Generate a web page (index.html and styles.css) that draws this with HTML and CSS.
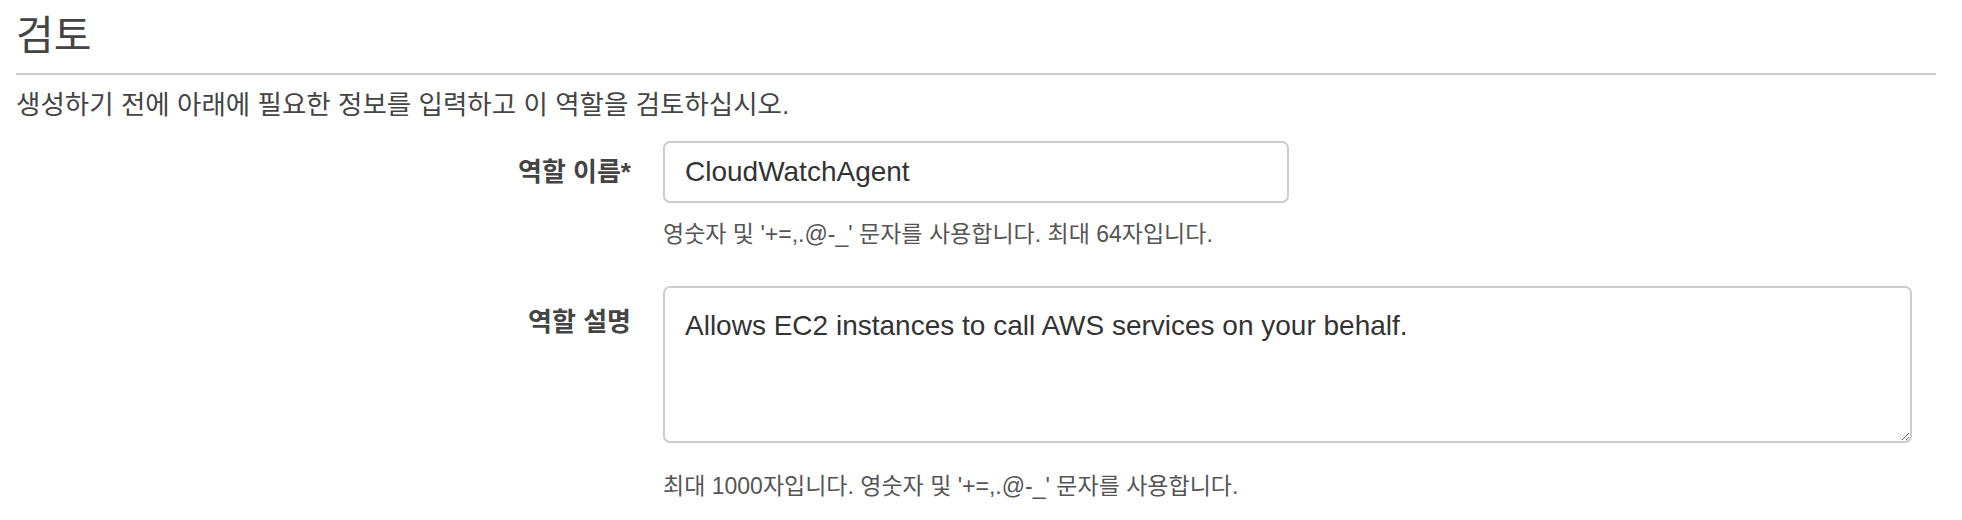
FILE: index.html
```html
<!DOCTYPE html>
<html lang="ko">
<head>
<meta charset="utf-8">
<title>검토</title>
<link rel="stylesheet" href="styles.css">
</head>
<body>
<div class="page">
  <h1 class="title">검토</h1>
  <div class="rule"></div>
  <p class="intro">생성하기 전에 아래에 필요한 정보를 입력하고 이 역할을 검토하십시오.</p>
  <div class="form">
    <label class="label label-mid" for="role-name">역할 이름*</label>
    <div class="field">
      <input id="role-name" class="input" type="text" value="CloudWatchAgent">
      <div class="help">영숫자 및 '+=,.@-_' 문자를 사용합니다. 최대 64자입니다.</div>
    </div>
    <label class="label label-top" for="role-desc">역할 설명</label>
    <div class="field">
      <textarea id="role-desc" class="textarea">Allows EC2 instances to call AWS services on your behalf.</textarea>
      <div class="help help-2">최대 1000자입니다. 영숫자 및 '+=,.@-_' 문자를 사용합니다.</div>
    </div>
  </div>
</div>
</body>
</html>
```
FILE: styles.css
```css
html, body {
  margin: 0;
  padding: 0;
  background: #ffffff;
}
body {
  font-family: "Liberation Sans", "Noto Sans CJK KR", sans-serif;
  color: #444444;
}
.page {
  padding: 0 26px 0 16px;
}
.title {
  margin: 0;
  padding-top: 12px;
  font-size: 41px;
  line-height: 48px;
  font-weight: 400;
  color: #444444;
}
.rule {
  margin-top: 13px;
  border-top: 2px solid #cccccc;
}
.intro {
  margin: 14px 0 0;
  font-size: 26.5px;
  line-height: 32px;
  color: #444444;
}
.form {
  display: grid;
  grid-template-columns: 615px 1fr;
  column-gap: 32px;
  margin-top: 20px;
}
.label {
  text-align: right;
  font-weight: 700;
  font-size: 26px;
  line-height: 32px;
  color: #444444;
}
.label-mid {
  padding-top: 15px;
}
.label-top {
  padding-top: 57px;
}
.field {
  display: flex;
  flex-direction: column;
  align-items: flex-start;
}
.input, .textarea {
  box-sizing: border-box;
  font-family: "Liberation Sans", "Noto Sans CJK KR", sans-serif;
  font-size: 28px;
  color: #333333;
  border: 2px solid #cccccc;
  border-radius: 7px;
  background: #ffffff;
  padding: 0 20px;
  margin: 0;
  outline: none;
}
.input {
  width: 626px;
  height: 62px;
}
.textarea {
  margin-top: 37px;
  width: 1249px;
  height: 157px;
  padding-top: 22px;
  line-height: 32px;
}
.help {
  margin-top: 16px;
  font-size: 23px;
  line-height: 30px;
  color: #555555;
}
.help-2 {
  margin-top: 28px;
}
```
